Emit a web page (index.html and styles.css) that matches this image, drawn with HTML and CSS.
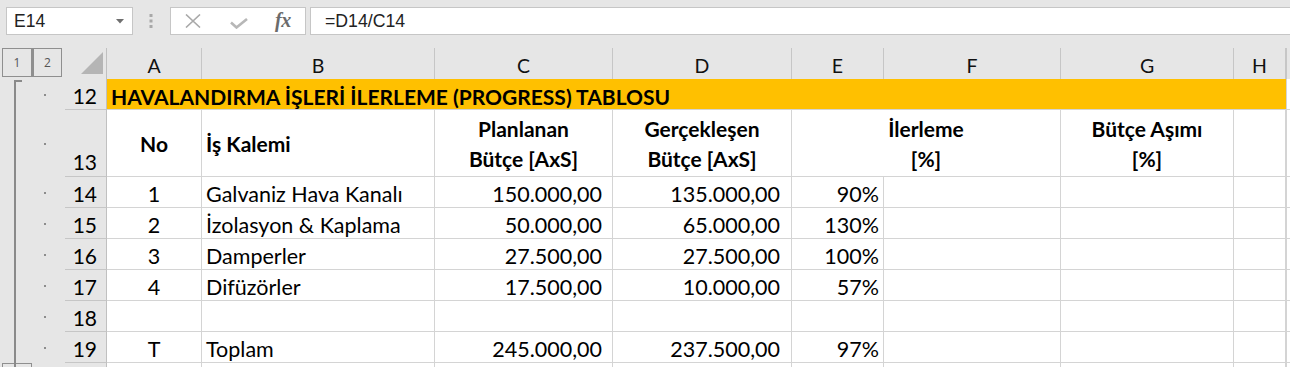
FILE: index.html
```html
<!DOCTYPE html>
<html lang="tr">
<head>
<meta charset="utf-8">
<title>Havalandırma İşleri İlerleme Tablosu</title>
<link rel="stylesheet" href="styles.css">
</head>
<body>
<div class="toolbar">
  <div class="namebox">
    <span class="name">E14</span>
    <svg class="ddarrow" width="8" height="5" viewBox="0 0 8 5"><polygon points="0,0 8,0 4,4.5" fill="#6f6f6f"/></svg>
  </div>
  <div class="grip">
    <svg width="4" height="14" viewBox="0 0 4 14"><rect x="0.5" y="0" width="3" height="3" fill="#a8a8a8"/><rect x="0.5" y="5.5" width="3" height="3" fill="#a8a8a8"/><rect x="0.5" y="11" width="3" height="3" fill="#a8a8a8"/></svg>
  </div>
  <div class="fxbox">
    <svg class="ico-x" width="16" height="14" viewBox="0 0 16 14"><path d="M1 0.5 L15 13.5 M15 0.5 L1 13.5" stroke="#a9a9a9" stroke-width="1.6" fill="none"/></svg>
    <svg class="ico-ok" width="18" height="11" viewBox="0 0 18 11"><path d="M1 4.5 L6.5 9.5 L17 1" stroke="#b7b7b7" stroke-width="2.6" fill="none"/></svg>
    <span class="fx">fx</span>
  </div>
  <div class="formula">=D14/C14</div>
</div>

<div class="sheet">
  <!-- column header row -->
  <div class="ol olhead"><span class="olbtn">1</span><span class="olbtn">2</span></div>
  <div class="corner"><svg width="22" height="22" viewBox="0 0 22 22"><polygon points="22,0 22,22 0,22" fill="#b5b5b5"/></svg></div>
  <div class="ch">A</div><div class="ch">B</div><div class="ch">C</div><div class="ch">D</div><div class="ch">E</div><div class="ch">F</div><div class="ch">G</div><div class="ch">H</div><div class="ch rest"></div>

  <!-- row 12 -->
  <div class="ol ol-first"><i class="dot"></i></div>
  <div class="rh">12</div>
  <div class="c title">HAVALANDIRMA İŞLERİ İLERLEME (PROGRESS) TABLOSU</div>
  <div class="c rest"></div>

  <!-- row 13 -->
  <div class="ol"><i class="dot"></i></div>
  <div class="rh rh-bottom">13</div>
  <div class="c hd center">No</div>
  <div class="c hd left">İş Kalemi</div>
  <div class="c hd center">Planlanan<br>Bütçe [AxS]</div>
  <div class="c hd center">Gerçekleşen<br>Bütçe [AxS]</div>
  <div class="c hd center span2">İlerleme<br>[%]</div>
  <div class="c hd center">Bütçe Aşımı<br>[%]</div>
  <div class="c"></div>
  <div class="c rest"></div>

  <!-- row 14 -->
  <div class="ol"><i class="dot"></i></div>
  <div class="rh">14</div>
  <div class="c center">1</div><div class="c left">Galvaniz Hava Kanalı</div><div class="c num pc">150.000,00</div><div class="c num pd">135.000,00</div><div class="c num pe">90%</div><div class="c"></div><div class="c"></div><div class="c"></div><div class="c rest"></div>

  <!-- row 15 -->
  <div class="ol"><i class="dot"></i></div>
  <div class="rh">15</div>
  <div class="c center">2</div><div class="c left">İzolasyon &amp; Kaplama</div><div class="c num pc">50.000,00</div><div class="c num pd">65.000,00</div><div class="c num pe">130%</div><div class="c"></div><div class="c"></div><div class="c"></div><div class="c rest"></div>

  <!-- row 16 -->
  <div class="ol"><i class="dot"></i></div>
  <div class="rh">16</div>
  <div class="c center">3</div><div class="c left">Damperler</div><div class="c num pc">27.500,00</div><div class="c num pd">27.500,00</div><div class="c num pe">100%</div><div class="c"></div><div class="c"></div><div class="c"></div><div class="c rest"></div>

  <!-- row 17 -->
  <div class="ol"><i class="dot"></i></div>
  <div class="rh">17</div>
  <div class="c center">4</div><div class="c left">Difüzörler</div><div class="c num pc">17.500,00</div><div class="c num pd">10.000,00</div><div class="c num pe">57%</div><div class="c"></div><div class="c"></div><div class="c"></div><div class="c rest"></div>

  <!-- row 18 -->
  <div class="ol"><i class="dot"></i></div>
  <div class="rh">18</div>
  <div class="c"></div><div class="c"></div><div class="c"></div><div class="c"></div><div class="c"></div><div class="c"></div><div class="c"></div><div class="c"></div><div class="c rest"></div>

  <!-- row 19 -->
  <div class="ol"><i class="dot"></i></div>
  <div class="rh">19</div>
  <div class="c center">T</div><div class="c left">Toplam</div><div class="c num pc">245.000,00</div><div class="c num pd">237.500,00</div><div class="c num pe">97%</div><div class="c"></div><div class="c"></div><div class="c"></div><div class="c rest"></div>

  <!-- partial row 20 -->
  <div class="ol olbottom"><span class="olbtn-b"></span></div>
  <div class="rh"></div>
  <div class="c"></div><div class="c"></div><div class="c"></div><div class="c"></div><div class="c"></div><div class="c"></div><div class="c"></div><div class="c"></div><div class="c rest"></div>
</div>
</body>
</html>
```

FILE: styles.css
```css
* { box-sizing: border-box; }
html, body { margin: 0; padding: 0; }
body {
  width: 1290px;
  height: 367px;
  overflow: hidden;
  background: #e6e6e6;
  font-family: "Lato", "Liberation Sans", sans-serif;
  color: #000;
}

/* ---------- formula bar ---------- */
.toolbar {
  height: 48px;
  display: flex;
  align-items: flex-start;
  padding: 7px 0 0 6px;
  background: #e6e6e6;
}
.namebox {
  width: 127px;
  height: 28px;
  background: #fff;
  border: 1px solid #c6c6c6;
  display: flex;
  align-items: center;
  justify-content: space-between;
  padding: 0 8px 0 7px;
}
.name {
  font-family: "Liberation Sans", Arial, sans-serif;
  font-size: 17.5px;
  color: #222;
}
.ddarrow { margin-top: 1px; }
.grip {
  width: 37px;
  height: 28px;
  display: flex;
  align-items: center;
  justify-content: center;
  padding-right: 2px;
}
.fxbox {
  width: 136px;
  height: 28px;
  background: #fff;
  border: 1px solid #c6c6c6;
  display: flex;
  align-items: center;
  padding-left: 14px;
  margin-right: 4px;
}
.ico-x { margin-right: 29px; }
.ico-ok { margin-top: 5px; margin-right: 27px; }
.fx {
  font-family: "Liberation Serif", "Times New Roman", serif;
  font-style: italic;
  font-weight: 700;
  font-size: 20px;
  color: #6b6b6b;
  letter-spacing: -0.5px;
  margin-top: -2px;
}
.formula {
  flex: 1;
  height: 28px;
  background: #fff;
  border: 1px solid #c6c6c6;
  border-right: none;
  padding-left: 14px;
  font-family: "Liberation Sans", Arial, sans-serif;
  font-size: 17.7px;
  line-height: 26px;
  color: #222;
}

/* ---------- sheet grid ---------- */
.sheet {
  display: grid;
  grid-template-columns: 65px 42px 95px 233px 178px 179px 92px 177px 173px 52px 1fr;
  grid-template-rows: 31px 31px 67px 31px 31px 31px 31px 31px 31px 20px;
  background: #fff;
}

.ol {
  background: #e6e6e6;
  display: flex;
  align-items: center;
  padding-left: 44px;
}
.dot {
  display: block;
  width: 2px;
  height: 2px;
  background: #8c8c8c;
}
.ol-first { position: relative; }
.ol-first::before {
  content: "";
  position: absolute;
  left: 14px;
  top: 1px;
  width: 6px;
  height: 290px;
  border-left: 2px solid #8a8a8a;
  border-top: 2px solid #8a8a8a;
}
.olhead {
  padding-left: 2px;
  align-items: flex-start;
}
.olbtn {
  width: 30px;
  height: 29px;
  border: 1px solid #8f8f8f;
  display: flex;
  align-items: center;
  justify-content: center;
  font-family: "Open Sans", "Liberation Sans", sans-serif;
  font-size: 12px;
  color: #555;
  background: #e6e6e6;
}
.olbtn + .olbtn { border-left: 2px solid #8f8f8f; }
.olbottom {
  padding-left: 2px;
  align-items: flex-start;
}
.olbtn-b {
  width: 30px;
  height: 10px;
  border: 1px solid #8f8f8f;
  border-bottom: none;
}

.corner {
  background: #e6e6e6;
  border-right: 1px solid #c0c0c0;
  display: flex;
  align-items: flex-end;
  justify-content: flex-end;
  padding: 0 3px 5px 0;
}
.ch {
  background: #e6e6e6;
  border-right: 1px solid #c6c6c6;
  display: flex;
  align-items: center;
  justify-content: center;
  padding-top: 4px;
  font-size: 19.5px;
  color: #111;
}
.rh {
  background: #e6e6e6;
  border-right: 1px solid #c0c0c0;
  border-bottom: 1px solid #c6c6c6;
  display: flex;
  align-items: center;
  justify-content: flex-end;
  padding: 3px 9px 0 0;
  font-size: 21px;
}
.rh-bottom {
  align-items: flex-end;
  padding-bottom: 2px;
}

.c {
  background: #fff;
  border-right: 1px solid #d4d4d4;
  border-bottom: 1px solid #d4d4d4;
  display: flex;
  align-items: center;
  padding: 4px 4px 0 4px;
  font-size: 21.5px;
  white-space: nowrap;
  overflow: hidden;
}
.c.rest, .ch.rest { border-right: none; }
.ch.rest { border-left: 1px solid #c6c6c6; }
.c.rest { border-left: 1px solid #d4d4d4; }

.title {
  grid-column: span 8;
  background: #ffc000;
  font-weight: 700;
  font-size: 21px;
  padding-left: 4px;
  border-right: none;
}
.hd {
  font-weight: 700;
  font-size: 21px;
  line-height: 30px;
  padding-top: 1px;
  white-space: nowrap;
}
.center { justify-content: center; text-align: center; }
.left { justify-content: flex-start; }
.span2 { grid-column: span 2; }
.num { justify-content: flex-end; }
.pc { padding-right: 10px; }
.pd { padding-right: 11px; }
.pe { padding-right: 4px; }
```
